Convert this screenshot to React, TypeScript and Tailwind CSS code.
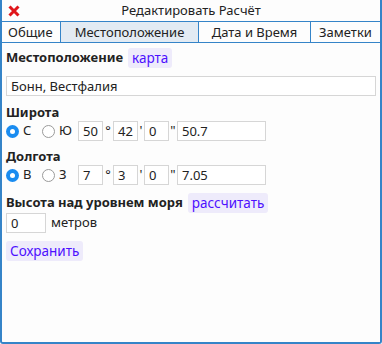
import React from 'react';

const font = { fontFamily: '"Noto Sans", "Open Sans", sans-serif' };

function Radio({ checked }: { checked?: boolean }) {
  return checked ? (
    <span className="w-[13px] h-[13px] rounded-full bg-[#1a8cf0] flex items-center justify-center">
      <span className="w-[5px] h-[5px] rounded-full bg-white" />
    </span>
  ) : (
    <span className="w-[13px] h-[13px] rounded-full border border-[#9a9a9a] bg-white" />
  );
}

function Box({ w, value }: { w: string; value: string }) {
  return (
    <div className={`${w} h-[20px] border border-[#d6d6d6] bg-white px-[4px] leading-[18px] text-[13px] text-[#222]`}>{value}</div>
  );
}

function Btn({ children }: { children: React.ReactNode }) {
  return (
    <span className="bg-[#eeebfb] rounded-[3px] px-[4px] h-[20px] leading-[20px] text-[13.5px] text-[#4d10ff]">{children}</span>
  );
}

function CoordRow({ a, b, deg, min, sec, frac }: { a: string; b: string; deg: string; min: string; sec: string; frac: string }) {
  return (
    <div className="flex items-center h-[20px] text-[13px] text-[#222]">
      <Radio checked />
      <span className="ml-[4px] w-[19px]">{a}</span>
      <Radio />
      <span className="ml-[4px] w-[19px]">{b}</span>
      <Box w="w-[25px]" value={deg} />
      <span className="w-[10px] text-center">°</span>
      <Box w="w-[25px]" value={min} />
      <span className="w-[6px] text-center">'</span>
      <Box w="w-[25px]" value={sec} />
      <span className="w-[8px] text-center">"</span>
      <Box w="w-[89px]" value={frac} />
    </div>
  );
}

export default function App() {
  return (
    <div style={font} className="w-[382px] h-[344px] bg-[#fdfdfd] border-2 border-t-0 border-[#3584c8] rounded-b-[3px] flex flex-col text-[#222]">
      {/* title */}
      <div className="h-[21px] flex items-center px-[6px]">
        <svg width="12" height="12" viewBox="0 0 12 12" className="shrink-0">
          <path d="M1.5 1.5 L10.5 10.5 M10.5 1.5 L1.5 10.5" stroke="#e0161b" strokeWidth="3" />
        </svg>
        <div className="flex-1 text-center text-[13px] leading-[21px]">Редактировать Расчёт</div>
        <div className="w-[12px]" />
      </div>

      {/* tabs */}
      <div className="h-[22px] flex border-y border-[#3584c8] text-[13px] leading-[20px]">
        <div className="w-[59px] border-r border-[#3584c8] pl-[6px]">Общие</div>
        <div className="w-[138px] border-r border-[#3584c8] bg-[#e3ebf3] text-center">Местоположение</div>
        <div className="w-[112px] border-r border-[#3584c8] text-center">Дата и Время</div>
        <div className="flex-1 text-center">Заметки</div>
      </div>

      {/* body */}
      <div className="flex flex-col px-[4px] pt-[5px]">
        <div className="flex items-center gap-[5px] h-[20px]">
          <span className="font-bold text-[13px]">Местоположение</span>
          <Btn>карта</Btn>
        </div>
        <div className="mt-[8px] h-[20px] border border-[#d6d6d6] bg-white px-[4px] leading-[18px] text-[13px]">Бонн, Вестфалия</div>

        <div className="mt-[7px] font-bold text-[13px] leading-[18px]">Широта</div>
        <CoordRow a="С" b="Ю" deg="50" min="42" sec="0" frac="50.7" />

        <div className="mt-[6px] font-bold text-[13px] leading-[18px]">Долгота</div>
        <CoordRow a="В" b="З" deg="7" min="3" sec="0" frac="7.05" />

        <div className="mt-[8px] flex items-center gap-[5px] h-[20px]">
          <span className="font-bold text-[13px]">Высота над уровнем моря</span>
          <Btn>рассчитать</Btn>
        </div>
        <div className="mt-[0px] flex items-center gap-[5px] h-[20px] text-[13px]">
          <Box w="w-[40px]" value="0" />
          <span>метров</span>
        </div>

        <div className="mt-[8px] flex h-[20px]">
          <Btn>Сохранить</Btn>
        </div>
      </div>
    </div>
  );
}
